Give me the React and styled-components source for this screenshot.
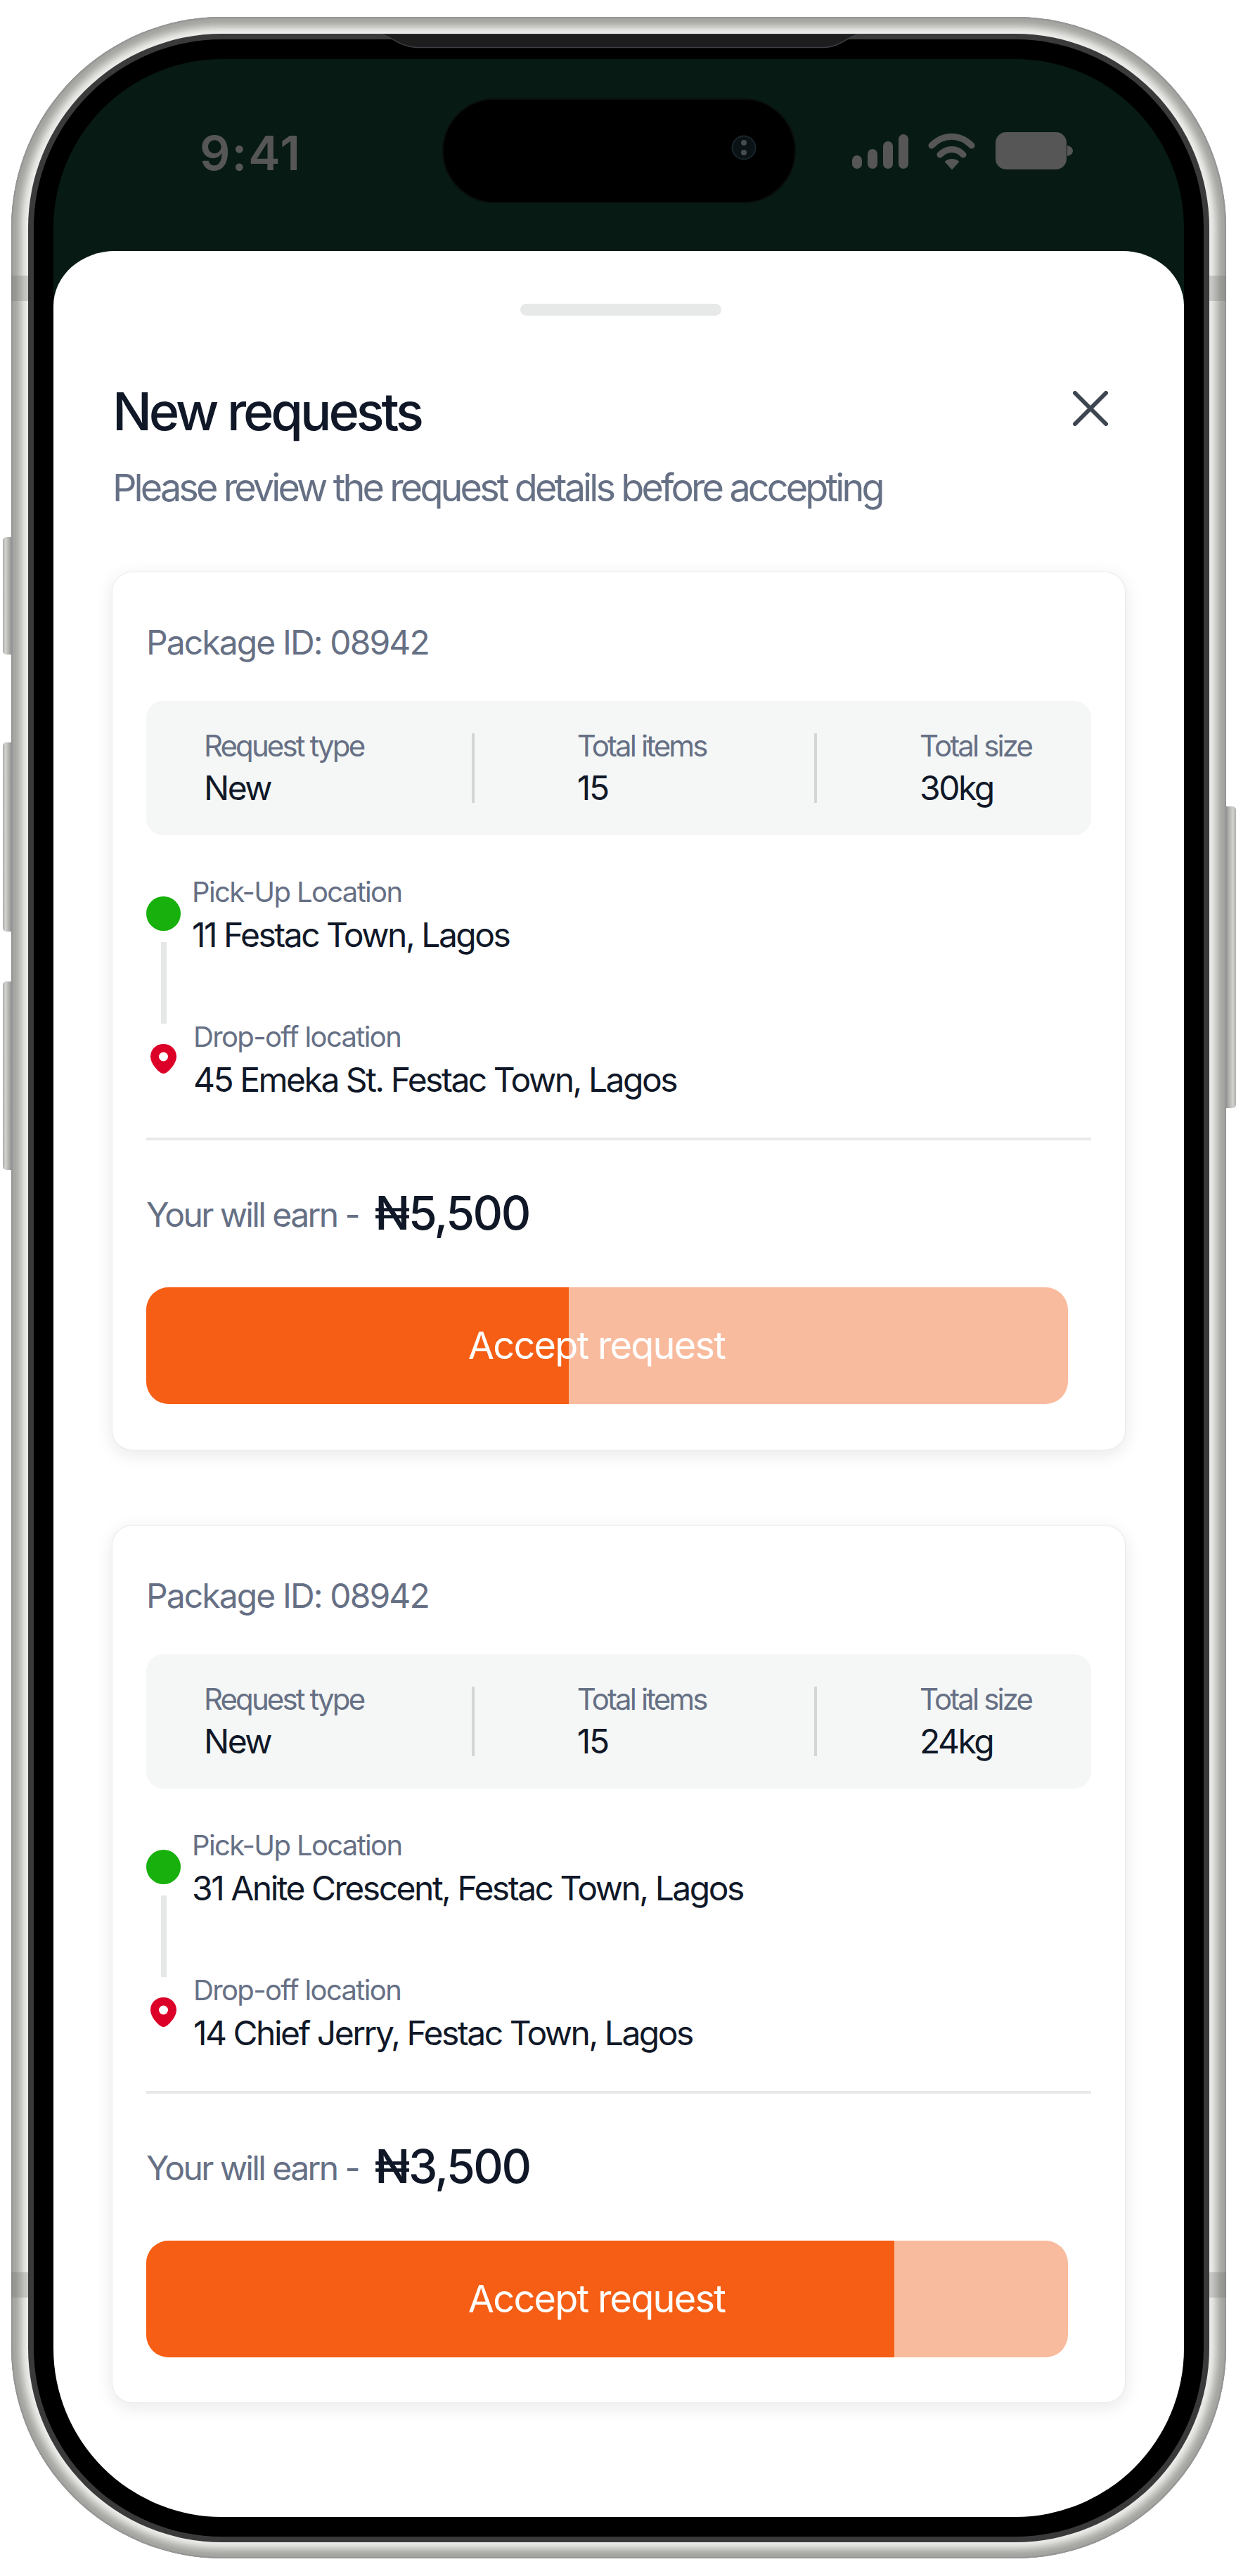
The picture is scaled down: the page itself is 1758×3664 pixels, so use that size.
import React from "react";
import styled, { createGlobalStyle } from "styled-components";

const GlobalStyle = createGlobalStyle`
  html, body {
    margin: 0;
    padding: 0;
    background: #fff;
  }
  * {
    box-sizing: border-box;
  }
`;

const Page = styled.div`
  position: relative;
  width: 1758px;
  height: 3664px;
  padding: 24px 14px 0 16px;
  font-family: Inter, "Liberation Sans", sans-serif;
  overflow: hidden;
`;

const Bezel = styled.div`
  position: relative;
  width: 1728px;
  padding: 24px 24px 23px;
  border-radius: 300px;
  background: #ebebe9;
  box-shadow: inset 0 0 2px 2px #939394, inset 0 0 3px 8px #a6a6a2,
    inset 0 0 3px 12px #b6b6b2, inset 0 0 3px 16px #c9c9c5,
    inset 0 0 3px 20px #dededb;
`;

const Rim = styled.div`
  padding: 8px;
  border-radius: 276px;
  background: #3a3a3a;
`;

const Glass = styled.div`
  padding: 28px;
  border-radius: 268px;
  background: #000;
`;

const Screen = styled.div`
  display: flex;
  flex-direction: column;
  height: 3496px;
  border-radius: 240px;
  background: #071a14;
  overflow: hidden;
`;

const SpeakerLip = styled.svg`
  position: absolute;
  top: 24px;
  left: 518px;
  width: 695px;
  height: 21px;
`;

const SideButton = styled.div`
  position: absolute;
  top: ${(p) => p.$top}px;
  ${(p) => (p.$right ? "left: 1744px;" : "left: 4px;")}
  width: ${(p) => (p.$right ? 14 : 12)}px;
  height: ${(p) => p.$height}px;
  border-radius: ${(p) => (p.$right ? "0 5px 5px 0" : "5px 0 0 5px")};
  background: linear-gradient(
    ${(p) => (p.$right ? "270deg" : "90deg")},
    #a9a9a7 0%,
    #d2d2cf 30%,
    #a9a9a6 80%,
    #8f9096 100%
  );
`;

const AntennaBand = styled.div`
  position: absolute;
  ${(p) => (p.$right ? "right: 0;" : "left: 0;")}
  top: ${(p) => p.$top}px;
  width: 24px;
  height: 36px;
  background: rgba(110, 110, 110, 0.28);
`;

const StatusBar = styled.div`
  display: flex;
  align-items: flex-start;
  flex: none;
  height: 273px;
  padding-left: 208px;
`;

const Clock = styled.div`
  width: 345px;
  margin-top: 92px;
  font-size: 68px;
  line-height: 82px;
  font-weight: 600;
  letter-spacing: 2px;
  color: #565656;
`;

const Island = styled.div`
  display: flex;
  justify-content: flex-end;
  align-items: center;
  width: 503px;
  height: 149px;
  margin-top: 56px;
  padding: 0 54px 9px 0;
  border: 2px solid #0a0d0c;
  border-radius: 75px;
  background: #000;
`;

const StatusIcons = styled.svg`
  width: 314px;
  height: 53px;
  margin: 104px 0 0 80px;
`;

const Sheet = styled.div`
  flex: 1;
  padding: 75px 84px 0;
  border-radius: 88px 88px 0 0 / 78px 78px 0 0;
  background: #fff;
`;

const Handle = styled.div`
  width: 286px;
  height: 17px;
  margin-left: 580px;
  border-radius: 9px;
  background: #e7e8e8;
`;

const Header = styled.div`
  display: flex;
  justify-content: space-between;
  align-items: flex-start;
  margin-top: 91px;
`;

const Title = styled.h1`
  margin: 0;
  font-size: 74px;
  line-height: 90px;
  font-weight: 500;
  letter-spacing: -4.1px;
  color: #101828;
`;

const CloseIcon = styled.svg`
  width: 50px;
  height: 50px;
  margin: 16px 24px 0 0;
`;

const Subtitle = styled.p`
  margin: 31px 0 87px;
  font-size: 54px;
  line-height: 66px;
  letter-spacing: -3.9px;
  color: #667085;
`;

const CardList = styled.div`
  display: flex;
  flex-direction: column;
  gap: 108px;
`;

const Card = styled.div`
  height: ${(p) => p.$height}px;
  padding: 71px 48px 0;
  border-radius: 28px;
  background: #fff;
  box-shadow: 0 0 0 1px #e9ebeb, 0 6px 26px rgba(16, 24, 40, 0.1);
`;

const PackageId = styled.div`
  font-size: 48px;
  line-height: 58px;
  letter-spacing: -1.9px;
  color: #667085;
`;

const InfoPanel = styled.div`
  display: flex;
  justify-content: space-between;
  align-items: center;
  height: 191px;
  margin-top: 54px;
  padding: 0 85px 0 82px;
  border-radius: 24px;
  background: #f5f7f6;
`;

const InfoColumn = styled.div`
  display: flex;
  flex-direction: column;
  gap: 6px;
`;

const InfoLabel = styled.div`
  font-size: 42px;
  line-height: 50px;
  letter-spacing: -2.9px;
  color: #667085;
`;

const Value = styled.div`
  font-size: 48px;
  line-height: 58px;
  letter-spacing: -2.5px;
  color: #101828;
`;

const InfoDivider = styled.div`
  width: 4px;
  height: 99px;
  margin: 0 -4px 0 4px;
  background: #d5d6d3;
`;

const Route = styled.div`
  display: flex;
  gap: 16px;
  margin-top: 57px;
`;

const RouteMarkers = styled.div`
  display: flex;
  flex-direction: column;
  align-items: center;
  width: 49px;
`;

const PickupDot = styled.div`
  width: 49px;
  height: 49px;
  margin-top: 30px;
  border-radius: 50%;
  background: #17b00c;
`;

const Connector = styled.div`
  width: 8px;
  height: 116px;
  margin-top: 16px;
  background: #e6e7e7;
`;

const DropPin = styled.svg`
  width: 37px;
  height: 42px;
  margin-top: 29px;
`;

const RouteStops = styled.div`
  display: flex;
  flex-direction: column;
`;

const Stop = styled.div`
  display: flex;
  flex-direction: column;
  gap: 8px;
  margin-top: ${(p) => (p.$last ? 92 : 0)}px;
  padding-left: ${(p) => (p.$last ? 2 : 0)}px;
`;

const StopLabel = styled.div`
  font-size: 40px;
  line-height: 48px;
  letter-spacing: -1.65px;
  color: #667085;
`;

const Rule = styled.div`
  height: 4px;
  margin-top: 53px;
  background: #e8e9e9;
`;

const EarnRow = styled.div`
  display: flex;
  align-items: flex-start;
  gap: 23px;
  margin-top: 63px;
`;

const EarnLabel = styled.div`
  margin-top: 14px;
  font-size: 48px;
  line-height: 58px;
  letter-spacing: -2.6px;
  color: #667085;
`;

const Amount = styled.div`
  font-size: 66px;
  line-height: 80px;
  font-weight: 500;
  letter-spacing: -2.5px;
  color: #101828;
`;

const AcceptButton = styled.div`
  position: relative;
  display: flex;
  justify-content: center;
  align-items: center;
  width: 1311px;
  height: 166px;
  margin-top: 66px;
  padding-right: 30px;
  border-radius: 32px;
  background: #f9bb9e;
  overflow: hidden;
`;

const ButtonFill = styled.div`
  position: absolute;
  top: 0;
  left: 0;
  bottom: 0;
  background: #f55e14;
`;

const ButtonLabel = styled.span`
  position: relative;
  font-size: 54px;
  line-height: 66px;
  letter-spacing: -1.75px;
  color: #fff;
`;

const requests = [
  {
    id: "08942",
    size: "30kg",
    pickup: "11 Festac Town, Lagos",
    dropoff: "45 Emeka St. Festac Town, Lagos",
    amount: "₦5,500",
    progress: 45.84,
    height: 1248,
  },
  {
    id: "08942",
    size: "24kg",
    pickup: "31 Anite Crescent, Festac Town, Lagos",
    dropoff: "14 Chief Jerry, Festac Town, Lagos",
    amount: "₦3,500",
    progress: 81.16,
    height: 1247,
  },
];

function RequestCard({ request }) {
  return (
    <Card $height={request.height}>
      <PackageId>Package ID: {request.id}</PackageId>
      <InfoPanel>
        <InfoColumn>
          <InfoLabel>Request type</InfoLabel>
          <Value>New</Value>
        </InfoColumn>
        <InfoDivider />
        <InfoColumn>
          <InfoLabel>Total items</InfoLabel>
          <Value>15</Value>
        </InfoColumn>
        <InfoDivider />
        <InfoColumn>
          <InfoLabel>Total size</InfoLabel>
          <Value>{request.size}</Value>
        </InfoColumn>
      </InfoPanel>
      <Route>
        <RouteMarkers>
          <PickupDot />
          <Connector />
          <DropPin viewBox="0 0 37 42">
            <path
              d="M18.5 0C8 0 0 7.5 0 18c0 9.5 9.5 19.5 14.5 22.7 2.5 1.6 5.5 1.6 8 0C27.5 37.5 37 27.5 37 18 37 7.5 29 0 18.5 0Z"
              fill="#dc0028"
            />
            <circle cx="18.5" cy="18" r="6.5" fill="#fff" />
          </DropPin>
        </RouteMarkers>
        <RouteStops>
          <Stop>
            <StopLabel>Pick-Up Location</StopLabel>
            <Value>{request.pickup}</Value>
          </Stop>
          <Stop $last>
            <StopLabel>Drop-off location</StopLabel>
            <Value>{request.dropoff}</Value>
          </Stop>
        </RouteStops>
      </Route>
      <Rule />
      <EarnRow>
        <EarnLabel>Your will earn -</EarnLabel>
        <Amount>{request.amount}</Amount>
      </EarnRow>
      <AcceptButton>
        <ButtonFill style={{ width: `${request.progress}%` }} />
        <ButtonLabel>Accept request</ButtonLabel>
      </AcceptButton>
    </Card>
  );
}

export default function App() {
  return (
    <>
      <GlobalStyle />
      <Page>
        <SideButton $top={764} $height={167} />
        <SideButton $top={1056} $height={269} />
        <SideButton $top={1396} $height={268} />
        <SideButton $right $top={1147} $height={429} />
        <Bezel>
          <AntennaBand $top={368} />
          <AntennaBand $right $top={368} />
          <AntennaBand $top={3208} />
          <AntennaBand $right $top={3208} />
          <SpeakerLip viewBox="0 0 695 21">
            <path
              d="M0 0C22 0 30 18 58 19.5H640C664 18 672 1 695 0Z"
              fill="#1d1d1d"
              stroke="#3d4147"
              strokeWidth="1.5"
            />
          </SpeakerLip>
          <Rim>
            <Glass>
              <Screen>
                <StatusBar>
                  <Clock>9:41</Clock>
                  <Island>
                    <svg width="36" height="36" viewBox="0 0 36 36">
                      <circle cx="18" cy="18" r="16.5" fill="#0b1216" stroke="#18262c" strokeWidth="2" />
                      <circle cx="18" cy="11" r="4" fill="#454c50" />
                      <circle cx="18" cy="25" r="4" fill="#454c50" />
                    </svg>
                  </Island>
                  <StatusIcons viewBox="0 0 314 53">
                    <rect x="0" y="33" width="14" height="19" rx="7" fill="#565656" />
                    <rect x="22" y="24" width="14" height="28" rx="7" fill="#565656" />
                    <rect x="44" y="13" width="14" height="39" rx="7" fill="#565656" />
                    <rect x="66" y="3" width="14" height="49" rx="7" fill="#565656" />
                    <path d="M113 19C130 2 153 2 170 19" fill="none" stroke="#565656" strokeWidth="9" strokeLinecap="round" />
                    <path d="M125 32C135 22 149 22 158 32" fill="none" stroke="#565656" strokeWidth="9" strokeLinecap="round" />
                    <path d="M133 42C138 38 146 38 151 42L142 52Z" fill="#565656" stroke="#565656" strokeWidth="2" strokeLinejoin="round" />
                    <rect x="204" y="0" width="101" height="53" rx="15" fill="#565656" />
                    <path d="M306 19C311 20 314 23 314 26.5C314 30 311 33 306 34Z" fill="#565656" />
                  </StatusIcons>
                </StatusBar>
                <Sheet>
                  <Handle />
                  <Header>
                    <Title>New requests</Title>
                    <CloseIcon viewBox="0 0 50 50">
                      <path d="M3 3L47 47M47 3L3 47" fill="none" stroke="#3d4550" strokeWidth="6" strokeLinecap="round" />
                    </CloseIcon>
                  </Header>
                  <Subtitle>Please review the request details before accepting</Subtitle>
                  <CardList>
                    {requests.map((request, i) => (
                      <RequestCard key={i} request={request} />
                    ))}
                  </CardList>
                </Sheet>
              </Screen>
            </Glass>
          </Rim>
        </Bezel>
      </Page>
    </>
  );
}
